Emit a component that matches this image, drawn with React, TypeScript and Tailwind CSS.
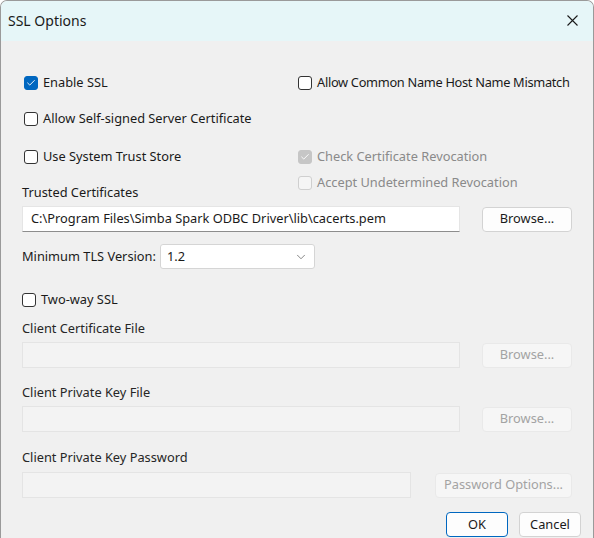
import { Check, ChevronDown } from "lucide-react";

type BoxProps = {
	label: string;
	checked?: boolean;
	disabled?: boolean;
	className?: string;
	textClass?: string;
};

const CheckRow = ({ label, checked, disabled, className, textClass }: BoxProps) => {
	let box = "border border-[#333333] bg-white";
	if (checked && !disabled) box = "bg-[#0067c0] border border-[#0067c0]";
	if (checked && disabled) box = "bg-[#c6c6c6] border border-[#c6c6c6]";
	if (!checked && disabled) box = "border border-[#cfcfcf] bg-[#f5f5f5]";

	return (
		<div className={`flex items-center h-5 whitespace-nowrap ${className ?? ""}`}>
			<span
				className={`shrink-0 w-[14px] h-[14px] rounded-[3px] flex items-center justify-center ${box}`}
			>
				{checked && <Check size={10} strokeWidth={2.2} className="text-white" />}
			</span>
			<span
				className={`ml-[5px] ${disabled ? "text-[#8a8a8a]" : "text-[#1a1a1a]"} ${textClass ?? ""}`}
			>
				{label}
			</span>
		</div>
	);
};

const Button = ({
	label,
	disabled,
	primary,
	className,
}: {
	label: string;
	disabled?: boolean;
	primary?: boolean;
	className?: string;
}) => {
	let look = "bg-[#fdfdfd] border-[#d3d3d3] text-[#1a1a1a]";
	if (disabled) look = "bg-[#f6f6f6] border-[#e9e9e9] text-[#a3a3a3]";
	if (primary) look = "bg-[#fdfdfd] border-[#0067c0] text-[#1a1a1a]";
	return (
		<div
			className={`shrink-0 h-[25px] border rounded-[4px] flex items-center justify-center whitespace-nowrap ${look} ${className ?? ""}`}
		>
			{label}
		</div>
	);
};

const FileInput = ({ value, disabled, className }: { value?: string; disabled?: boolean; className?: string }) => (
	<div
		className={`shrink-0 h-[26px] flex items-center px-2 whitespace-nowrap ${
			disabled
				? "bg-[#f3f3f3] border border-[#e4e4e4]"
				: "bg-white border border-[#e5e5e5] border-b-[#8d8d8d]"
		} ${className ?? ""}`}
	>
		{value}
	</div>
);

export default function App() {
	return (
		<div
			className="w-[594px] h-[538px] overflow-hidden bg-[#f0f0f0] text-[12.8px] text-[#1a1a1a] border-t border-l border-r border-[#9a9a9a] rounded-tl-[7px] rounded-tr-[7px]"
			style={{ fontFamily: '"Noto Sans", "Open Sans", sans-serif' }}
		>
			{/* title bar */}
			<div className="h-[40px] bg-[#e6f6f8] flex items-center justify-between pl-[7px] pr-[15px] pb-[1px]">
				<span className="text-[14px] text-[#1a1a1a]">SSL Options</span>
				<svg width="11" height="11" viewBox="0 0 11 11">
					<path d="M0.5 0.5 L10.5 10.5 M10.5 0.5 L0.5 10.5" stroke="#1a1a1a" strokeWidth="1.1" />
				</svg>
			</div>

			<div className="pl-[21px] pr-[21px]">
				{/* two columns of options */}
				<div className="flex pt-[32px]">
					<div className="w-[276px] shrink-0 flex flex-col">
						<CheckRow label="Enable SSL" checked className="ml-[2px]" />
						<CheckRow label="Allow Self-signed Server Certificate" className="ml-[2px] mt-4" />
						<CheckRow label="Use System Trust Store" className="ml-[2px] mt-[18px]" />
						<div className="mt-[17px] h-[18px] flex items-center">Trusted Certificates</div>
					</div>
					<div className="flex flex-col">
						<CheckRow
							label="Allow Common Name Host Name Mismatch"
							textClass="tracking-[-0.3px]"
						/>
						<CheckRow label="Check Certificate Revocation" checked disabled className="mt-[54px]" />
						<CheckRow label="Accept Undetermined Revocation" disabled className="mt-[6px]" />
					</div>
				</div>

				<div className="flex items-center mt-[4px]">
					<FileInput
						value="C:\Program Files\Simba Spark ODBC Driver\lib\cacerts.pem"
						className="w-[438px]"
					/>
					<Button label="Browse..." className="w-[90px] ml-[22px]" />
				</div>

				<div className="flex items-center mt-[12px]">
					<span className="w-[138px] shrink-0 whitespace-nowrap">Minimum TLS Version:</span>
					<div className="shrink-0 w-[155px] h-[25px] bg-white border border-[#d5d5d5] rounded-[3px] flex items-center justify-between pl-[6px] pr-[6px]">
						<span>1.2</span>
						<ChevronDown size={14} strokeWidth={1.3} className="text-[#606060]" />
					</div>
				</div>

				<CheckRow label="Two-way SSL" className="mt-[21px]" />
				<div className="mt-[10px] h-[18px] flex items-center text-[#262626]">Client Certificate File</div>
				<div className="flex items-center mt-[4px]">
					<FileInput disabled className="w-[438px]" />
					<Button label="Browse..." disabled className="w-[90px] ml-[22px]" />
				</div>

				<div className="mt-[16px] h-[18px] flex items-center text-[#262626]">Client Private Key File</div>
				<div className="flex items-center mt-[4px]">
					<FileInput disabled className="w-[438px]" />
					<Button label="Browse..." disabled className="w-[90px] ml-[22px]" />
				</div>

				<div className="mt-[17px] h-[18px] flex items-center text-[#262626]">Client Private Key Password</div>
				<div className="flex items-center mt-[5px]">
					<FileInput disabled className="w-[389px]" />
					<Button label="Password Options..." disabled className="w-[137px] ml-[24px]" />
				</div>

				<div className="flex justify-end mt-[14px] mr-[-9px] gap-[11px]">
					<Button label="OK" primary className="w-[62px]" />
					<Button label="Cancel" className="w-[62px]" />
				</div>
			</div>
		</div>
	);
}
